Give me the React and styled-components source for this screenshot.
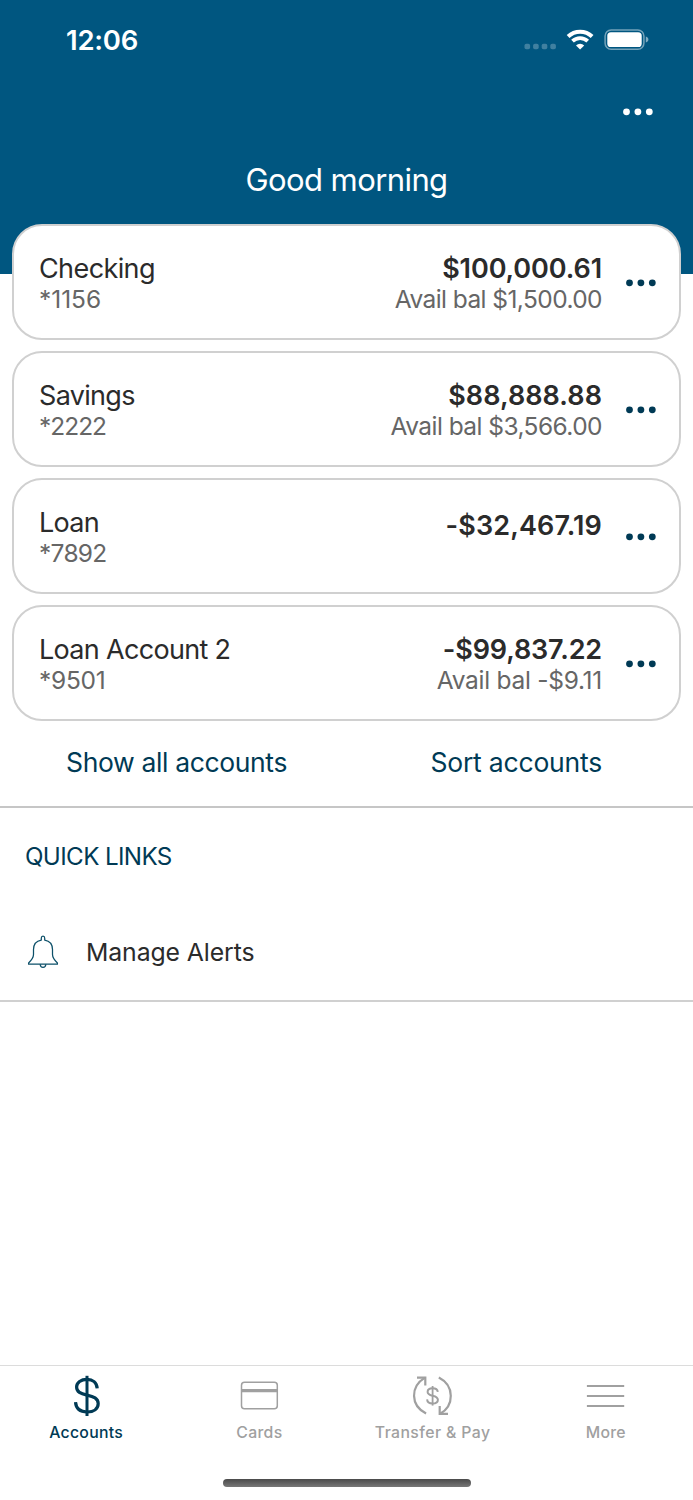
import React from "react";
import styled, { createGlobalStyle, css } from "styled-components";

const accounts = [
  {
    name: "Checking",
    nameGap: -0.6,
    number: "*1156",
    numberGap: -0.05,
    amount: "$100,000.61",
    amountGap: -0.1,
    avail: "Avail bal $1,500.00",
    availGap: -0.58,
  },
  {
    name: "Savings",
    nameGap: -0.68,
    number: "*2222",
    numberGap: -1.0,
    amount: "$88,888.88",
    amountGap: 0.06,
    avail: "Avail bal $3,566.00",
    availGap: -0.56,
  },
  {
    name: "Loan",
    nameGap: -0.75,
    number: "*7892",
    numberGap: -0.7,
    amount: "-$32,467.19",
    amountGap: 0.12,
  },
  {
    name: "Loan Account 2",
    nameGap: -0.68,
    number: "*9501",
    numberGap: -0.25,
    amount: "-$99,837.22",
    amountGap: -0.14,
    avail: "Avail bal -$9.11",
    availGap: -0.27,
  },
];

// 상태바 아이콘
const SignalIcon = () => (
  <svg width="32" height="20" viewBox="0 0 32 20" fill="#ffffff" fillOpacity="0.25">
    <rect x="0.5" y="13.8" width="5.6" height="5.4" rx="1.8" />
    <rect x="9.1" y="13.8" width="5.6" height="5.4" rx="1.8" />
    <rect x="17.7" y="13.8" width="5.6" height="5.4" rx="1.8" />
    <rect x="26.3" y="13.8" width="5.6" height="5.4" rx="1.8" />
  </svg>
);

const WifiIcon = () => (
  <svg width="28" height="22" viewBox="0 0 28 22" fill="none" stroke="#ffffff">
    <path d="M2.1 7.5 A17.4 17.4 0 0 1 26.1 7.5" strokeWidth="4" />
    <path d="M6.5 12.2 A11 11 0 0 1 21.7 12.2" strokeWidth="3.8" />
    <path
      d="M14.1 20.6 L10 16.4 A5.9 5.9 0 0 1 18.2 16.4 Z"
      fill="#ffffff"
      stroke="none"
    />
  </svg>
);

const BatteryIcon = () => (
  <svg width="46" height="22" viewBox="0 0 46 22" fill="none">
    <rect
      x="1.1"
      y="0.9"
      width="38.8"
      height="19.4"
      rx="6"
      stroke="#ffffff"
      strokeOpacity="0.45"
      strokeWidth="1.5"
    />
    <rect x="3.3" y="3.2" width="34.4" height="14.8" rx="3.6" fill="#ffffff" />
    <path
      d="M41.8 7.6 C43.6 8.1 44.4 9.2 44.4 10.6 C44.4 12 43.6 13.1 41.8 13.6 Z"
      fill="#ffffff"
      fillOpacity="0.5"
    />
  </svg>
);

const DotsIcon = ({ color }) => (
  <svg width="31" height="8" viewBox="0 0 31 8" fill={color}>
    <circle cx="4.5" cy="3.8" r="3.4" />
    <circle cx="15.9" cy="3.8" r="3.4" />
    <circle cx="27.3" cy="3.8" r="3.4" />
  </svg>
);

const BellIcon = () => (
  <svg
    width="32"
    height="34"
    viewBox="0 0 32 34"
    fill="none"
    stroke="#0d5069"
    strokeWidth="1.25"
    strokeLinejoin="round"
  >
    <path d="M14.3 5.1 V3 C14.3 0.5 17.7 0.5 17.7 3 V5.1 C22.8 6 25.5 9.6 25.5 14.5 V19.5 C25.5 22.8 26.5 24.2 30.4 28 V29.2 H1.6 V28 C5.5 24.2 6.5 22.8 6.5 19.5 V14.5 C6.5 9.6 9.2 6 14.3 5.1 Z" />
    <path d="M13.2 29.2 C13.4 33.4 18.6 33.4 18.8 29.2" />
  </svg>
);

// 하단 탭 아이콘
const DollarIcon = () => (
  <svg width="42" height="42" viewBox="0 0 42 42" fill="none" stroke="currentColor">
    <path
      d="M31.2 13.3 C30.7 7.6 26.8 4.4 21 4.4 C15 4.4 10.6 7.6 10.6 12 C10.6 17 14.6 18.7 21 20.1 C27.6 21.5 32.2 23.2 32.2 28.6 C32.2 33.9 27.7 37 21.2 37 C14.3 37 10 33.6 9.5 27.2"
      strokeWidth="3.2"
    />
    <path d="M21 0.8 V41" strokeWidth="3" />
  </svg>
);

const CardIcon = () => (
  <svg width="42" height="42" viewBox="0 0 42 42" fill="none" stroke="currentColor">
    <rect x="2.5" y="7.2" width="35.8" height="26.6" rx="3" strokeWidth="1.5" />
    <path d="M2.1 15.6 H38.7" strokeWidth="3.3" />
  </svg>
);

const TransferIcon = () => (
  <svg width="42" height="42" viewBox="0 0 42 42" fill="none" stroke="currentColor">
    <path d="M14.1 38.5 C-1.8 30.5 -1.8 11.5 13 2.6" strokeWidth="2.2" />
    <path d="M5 2.6 H13.3 V10.4" strokeWidth="2.2" />
    <path d="M26.8 2.6 C42.6 10.7 42.6 30.5 27.8 39" strokeWidth="2.2" />
    <path d="M36 38.8 H27.7 V31" strokeWidth="2.2" />
    <path
      d="M25.8 16.9 C25.5 14.6 23.4 13.3 20.6 13.3 C17.6 13.3 15.6 14.6 15.6 16.9 C15.6 19.3 17.8 20 20.6 20.7 C23.6 21.4 25.9 22.2 25.9 24.8 C25.9 27.1 23.7 28.6 20.6 28.6 C17.4 28.6 15.3 27 15.1 24.4"
      strokeWidth="2"
    />
    <path d="M20.6 11 V30.6" strokeWidth="1.8" />
  </svg>
);

const MoreIcon = () => (
  <svg width="42" height="42" viewBox="0 0 42 42" stroke="currentColor">
    <path d="M1.9 11 H39.2 M1.9 21 H39.2 M1.9 31 H39.2" strokeWidth="1.9" />
  </svg>
);

const tabs = [
  { label: "Accounts", icon: <DollarIcon />, active: true, gap: 0.27 },
  { label: "Cards", icon: <CardIcon />, gap: 0.34 },
  { label: "Transfer & Pay", icon: <TransferIcon />, gap: 0.4 },
  { label: "More", icon: <MoreIcon />, gap: 0.24 },
];

const AccountCard = ({ account }) => (
  <StCard>
    <StCardText>
      <StName $gap={account.nameGap}>{account.name}</StName>
      <StSub $gap={account.numberGap}>{account.number}</StSub>
    </StCardText>
    <StCardText $right $single={!account.avail}>
      <StAmount $gap={account.amountGap}>{account.amount}</StAmount>
      {account.avail && <StSub $gap={account.availGap}>{account.avail}</StSub>}
    </StCardText>
    <StCardMenu>
      <DotsIcon color="#003a55" />
    </StCardMenu>
  </StCard>
);

const App = () => {
  return (
    <>
      <GlobalStyle />
      <StScreen>
        <StHeader>
          <StStatusBar>
            <StTime>12:06</StTime>
            <StStatusIcons>
              <SignalIcon />
              <WifiIcon />
              <BatteryIcon />
            </StStatusIcons>
          </StStatusBar>
          <StHeaderMenu>
            <DotsIcon color="#ffffff" />
          </StHeaderMenu>
          <StGreeting>Good morning</StGreeting>
        </StHeader>

        <StAccountList>
          {accounts.map((account) => (
            <AccountCard key={account.number} account={account} />
          ))}
        </StAccountList>

        <StActions>
          <StAction $gap={-0.36}>Show all accounts</StAction>
          <StAction $gap={-0.2}>Sort accounts</StAction>
        </StActions>

        <StQuickLinks>
          <StQuickTitle>QUICK LINKS</StQuickTitle>
          <StQuickItem>
            <BellIcon />
            <StQuickLabel $gap={-0.1}>Manage Alerts</StQuickLabel>
          </StQuickItem>
        </StQuickLinks>

        <StTabBar>
          {tabs.map((tab) => (
            <StTab key={tab.label} $active={tab.active}>
              {tab.icon}
              <StTabLabel $gap={tab.gap}>{tab.label}</StTabLabel>
            </StTab>
          ))}
        </StTabBar>
        <StHomeArea>
          <StHomeBar />
        </StHomeArea>
      </StScreen>
    </>
  );
};

export default App;

const GlobalStyle = createGlobalStyle`
  body {
    margin: 0;
    background: #ffffff;
    font-family: Inter, "Liberation Sans", sans-serif;
  }

  svg {
    display: block;
    flex-shrink: 0;
  }
`;

const spacing = css`
  letter-spacing: ${({ $gap }) => $gap || 0}px;
  white-space: nowrap;
`;

const StScreen = styled.div`
  display: flex;
  flex-direction: column;
  width: 693px;
  height: 1500px;
  overflow: hidden;
  background: #ffffff;
`;

const StHeader = styled.header`
  flex-shrink: 0;
  height: 274px;
  background: #005680;
  color: #ffffff;
`;

const StStatusBar = styled.div`
  display: flex;
  justify-content: space-between;
  align-items: center;
  height: 80px;
  padding: 0 43px 0 66px;
  box-sizing: border-box;
`;

const StTime = styled.div`
  font-size: 27.5px;
  font-weight: 600;
  line-height: 32px;
  letter-spacing: -0.24px;
`;

const StStatusIcons = styled.div`
  display: flex;
  align-items: center;
  gap: 10px;
`;

const StHeaderMenu = styled.div`
  display: flex;
  justify-content: flex-end;
  align-items: center;
  height: 64px;
  padding-right: 40px;
`;

const StGreeting = styled.h1`
  margin: 17px 0 0;
  font-size: 31px;
  font-weight: 400;
  line-height: 38px;
  letter-spacing: -0.58px;
  text-align: center;
`;

const StAccountList = styled.div`
  display: flex;
  flex-direction: column;
  gap: 11px;
  margin: -50px 12px 0;
`;

const StCard = styled.div`
  display: flex;
  align-items: flex-start;
  height: 116px;
  padding: 27px 23px 0 25px;
  box-sizing: border-box;
  background: #ffffff;
  border: 2px solid #d0d0d0;
  border-radius: 30px;
`;

const StCardText = styled.div`
  display: flex;
  flex-direction: column;
  align-items: flex-start;

  ${({ $right }) =>
    $right &&
    css`
      flex: 1;
      align-items: flex-end;
    `}

  ${({ $single }) =>
    $single &&
    css`
      padding-top: 3px;
    `}
`;

const StName = styled.div`
  font-size: 27px;
  line-height: 32px;
  color: #2b2b2b;
  ${spacing}
`;

const StAmount = styled.div`
  font-size: 27px;
  font-weight: 600;
  line-height: 32px;
  color: #2b2b2b;
  ${spacing}
`;

const StSub = styled.div`
  font-size: 24.5px;
  line-height: 29px;
  color: #666666;
  ${spacing}
`;

const StCardMenu = styled.div`
  display: flex;
  align-items: center;
  height: 60px;
  margin-left: 23px;
`;

const StActions = styled.div`
  display: flex;
  flex-shrink: 0;
  justify-content: space-between;
  height: 87px;
  padding: 25px 91px 0 66px;
  box-sizing: border-box;
  border-bottom: 2px solid #c6c6c6;
`;

const StAction = styled.div`
  font-size: 26.5px;
  line-height: 32px;
  color: #003a55;
  ${spacing}
`;

const StQuickLinks = styled.section`
  flex-shrink: 0;
  height: 194px;
  padding: 34px 25px 0;
  box-sizing: border-box;
  border-bottom: 2px solid #d0d0d0;
`;

const StQuickTitle = styled.h2`
  margin: 0;
  font-size: 24.2px;
  font-weight: 400;
  line-height: 30px;
  letter-spacing: -0.63px;
  color: #003a55;
`;

const StQuickItem = styled.div`
  display: flex;
  align-items: center;
  gap: 27px;
  height: 34px;
  margin-top: 63px;
  padding-left: 2px;
`;

const StQuickLabel = styled.div`
  font-size: 24.8px;
  line-height: 32px;
  color: #2b2b2b;
  ${spacing}
`;

const StTabBar = styled.nav`
  display: flex;
  flex-shrink: 0;
  height: 94px;
  margin-top: auto;
  border-top: 1px solid #dcdcdc;
`;

const StTab = styled.div`
  display: flex;
  flex: 1;
  flex-direction: column;
  align-items: center;
  padding-top: 9px;
  color: ${({ $active }) => ($active ? "#003a55" : "#a0a0a0")};
`;

const StTabLabel = styled.div`
  margin: 6px 1px 0 0;
  font-size: 15.8px;
  font-weight: 500;
  line-height: 20px;
  ${spacing}
`;

const StHomeArea = styled.div`
  display: flex;
  flex-shrink: 0;
  justify-content: center;
  height: 40px;
  padding-top: 19px;
  box-sizing: border-box;
`;

const StHomeBar = styled.div`
  width: 248px;
  height: 8px;
  border-radius: 4px;
  background: linear-gradient(#4a4a4a, #777777);
`;
